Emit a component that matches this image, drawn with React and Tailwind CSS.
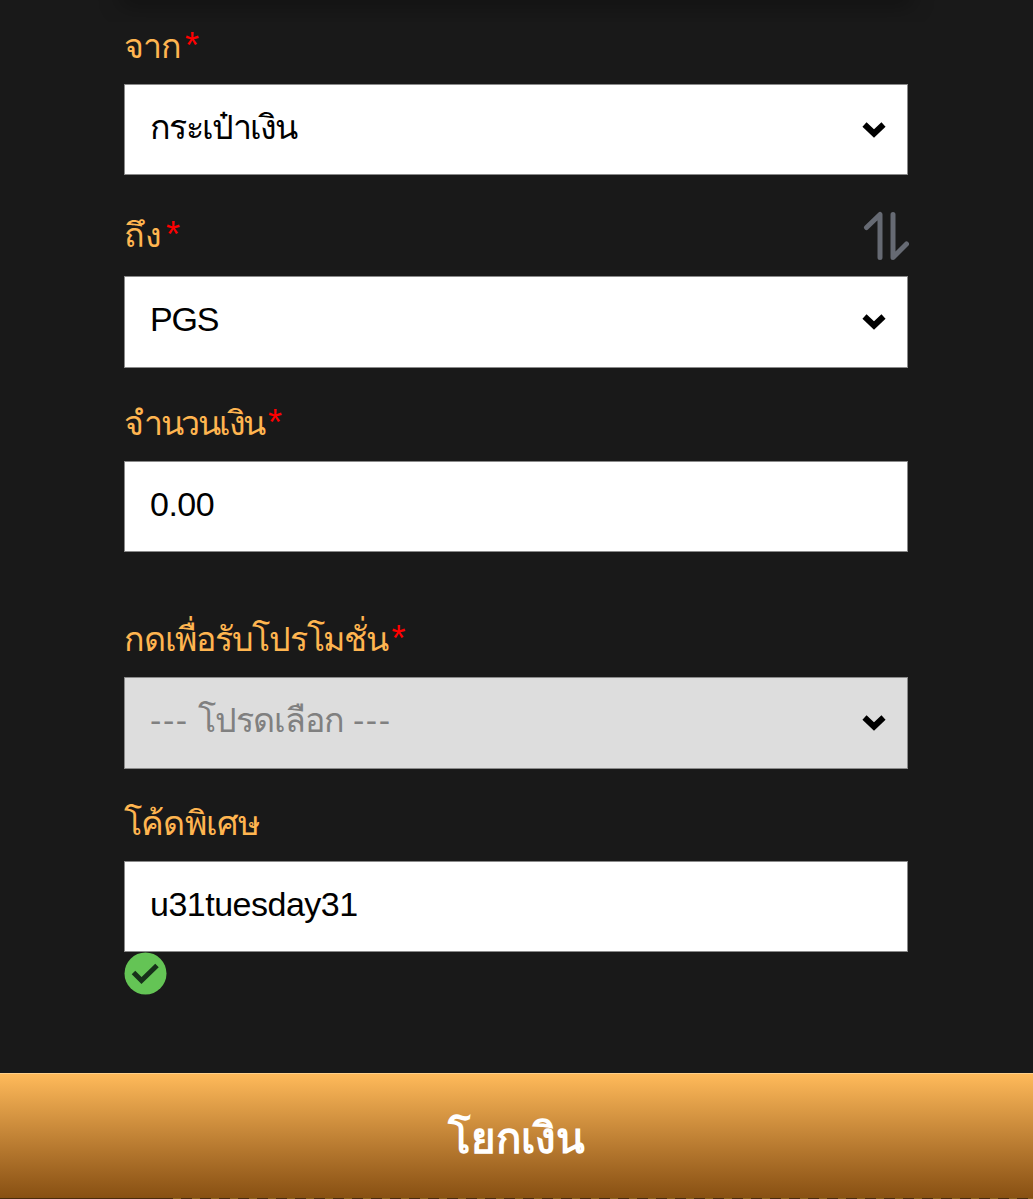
import React from 'react';

const Label = ({ children, required, className = '' }) => (
  <label className="flex h-12 items-center text-[34px] leading-[48px] whitespace-nowrap text-[#ffb550]">
    <span className={className}>{children}</span>
    {required && <span className="ml-1 text-[36px] text-[#ff0000]">*</span>}
  </label>
);

const Chevron = () => (
  <svg className="h-4 w-6 shrink-0" viewBox="0 0 24 16" fill="none">
    <path d="M2.500 2.500 12 11.500 21.500 2.500" stroke="#000" strokeWidth="6" />
  </svg>
);

const SwapIcon = () => (
  <svg className="-mr-px h-[50px] w-[46px]" viewBox="0 0 46 50" fill="none">
    <path
      d="M3.500 16.500 17 3.500V46.500M30 3.500V46.500L43.500 33"
      stroke="#666a73"
      strokeWidth="5"
      strokeLinecap="round"
      strokeLinejoin="round"
    />
  </svg>
);

const CheckIcon = () => (
  <svg className="h-[43px] w-[43px]" viewBox="0 0 43 43" fill="none">
    <circle cx="21.500" cy="21.500" r="21" fill="#64c455" />
    <path d="M9.500 20.500 17.500 28.500 33 13.500" stroke="#17301a" strokeWidth="5" />
  </svg>
);

// White input box; select boxes also get the arrow
const Field = ({ children, select, disabled, className = '' }) => (
  <div
    className={`flex items-center justify-between border border-[#8a8a8a] pr-[21px] pl-[25px] text-[34px] leading-[48px] ${
      disabled ? 'bg-[#dddddd] text-[#808080]' : 'bg-white text-black'
    } ${className}`}
  >
    <span className="-mt-1.5 whitespace-nowrap">{children}</span>
    {select && <Chevron />}
  </div>
);

export default function App() {
  return (
    <main className="flex h-[1199px] w-[1033px] flex-col overflow-hidden bg-[#191919] font-['Liberation_Sans',sans-serif]">
      {/* shadow cast by the panel above */}
      <div className="h-[22px] shrink-0 overflow-hidden px-[125px]">
        <div className="-mt-2 h-2 shadow-[0_0_22px_4px_rgba(0,0,0,0.4)]" />
      </div>

      <form className="flex h-[1051px] shrink-0 flex-col pr-[125px] pl-[124px]">
        <Label required className="tracking-[-1px]">จาก</Label>
        <Field select className="mt-[14px] h-[91px]">
          <span className="tracking-[-1.7px]">กระเป๋าเงิน</span>
        </Field>

        <div className="mt-[35px] flex h-[52px] items-center justify-between">
          <div className="-mt-0.5">
            <Label required>ถึง</Label>
          </div>
          <SwapIcon />
        </div>
        <Field select className="mt-[14px] h-[92px]">
          <span className="tracking-[-1.2px]">PGS</span>
        </Field>

        <div className="mt-[31px]">
          <Label required className="tracking-[-2.3px]">จำนวนเงิน</Label>
        </div>
        <Field className="mt-[14px] h-[91px]">
          <span className="tracking-[-0.5px]">0.00</span>
        </Field>

        <div className="mt-[63px]">
          <Label required className="tracking-[-1.25px]">กดเพื่อรับโปรโมชั่น</Label>
        </div>
        <Field select disabled className="mt-[14px] h-[92px]">
          <span className="tracking-[1.6px]">---</span>{' '}
          <span className="tracking-[-1.1px]">โปรดเลือก</span>{' '}
          <span className="tracking-[1.6px]">---</span>
        </Field>

        <div className="mt-[30px]">
          <Label className="tracking-[-0.8px]">โค้ดพิเศษ</Label>
        </div>
        <Field className="mt-[14px] h-[91px]">
          <span className="tracking-[-0.5px]">u31tuesday31</span>
        </Field>
        <CheckIcon />
      </form>

      <button className="flex h-[125px] shrink-0 items-center justify-center border-t border-[#ffd08a] bg-linear-to-b from-[#ffba5a] to-[#885012] pt-[5px] text-[42px] leading-none font-bold text-white">
        โยกเงิน
      </button>
      <div className="h-px bg-[#4a2d0c] pl-[173px]">
        <div className="h-px bg-[repeating-linear-gradient(90deg,#8a6420_0_8px,#4a2d0c_8px_19px)]" />
      </div>
    </main>
  );
}
